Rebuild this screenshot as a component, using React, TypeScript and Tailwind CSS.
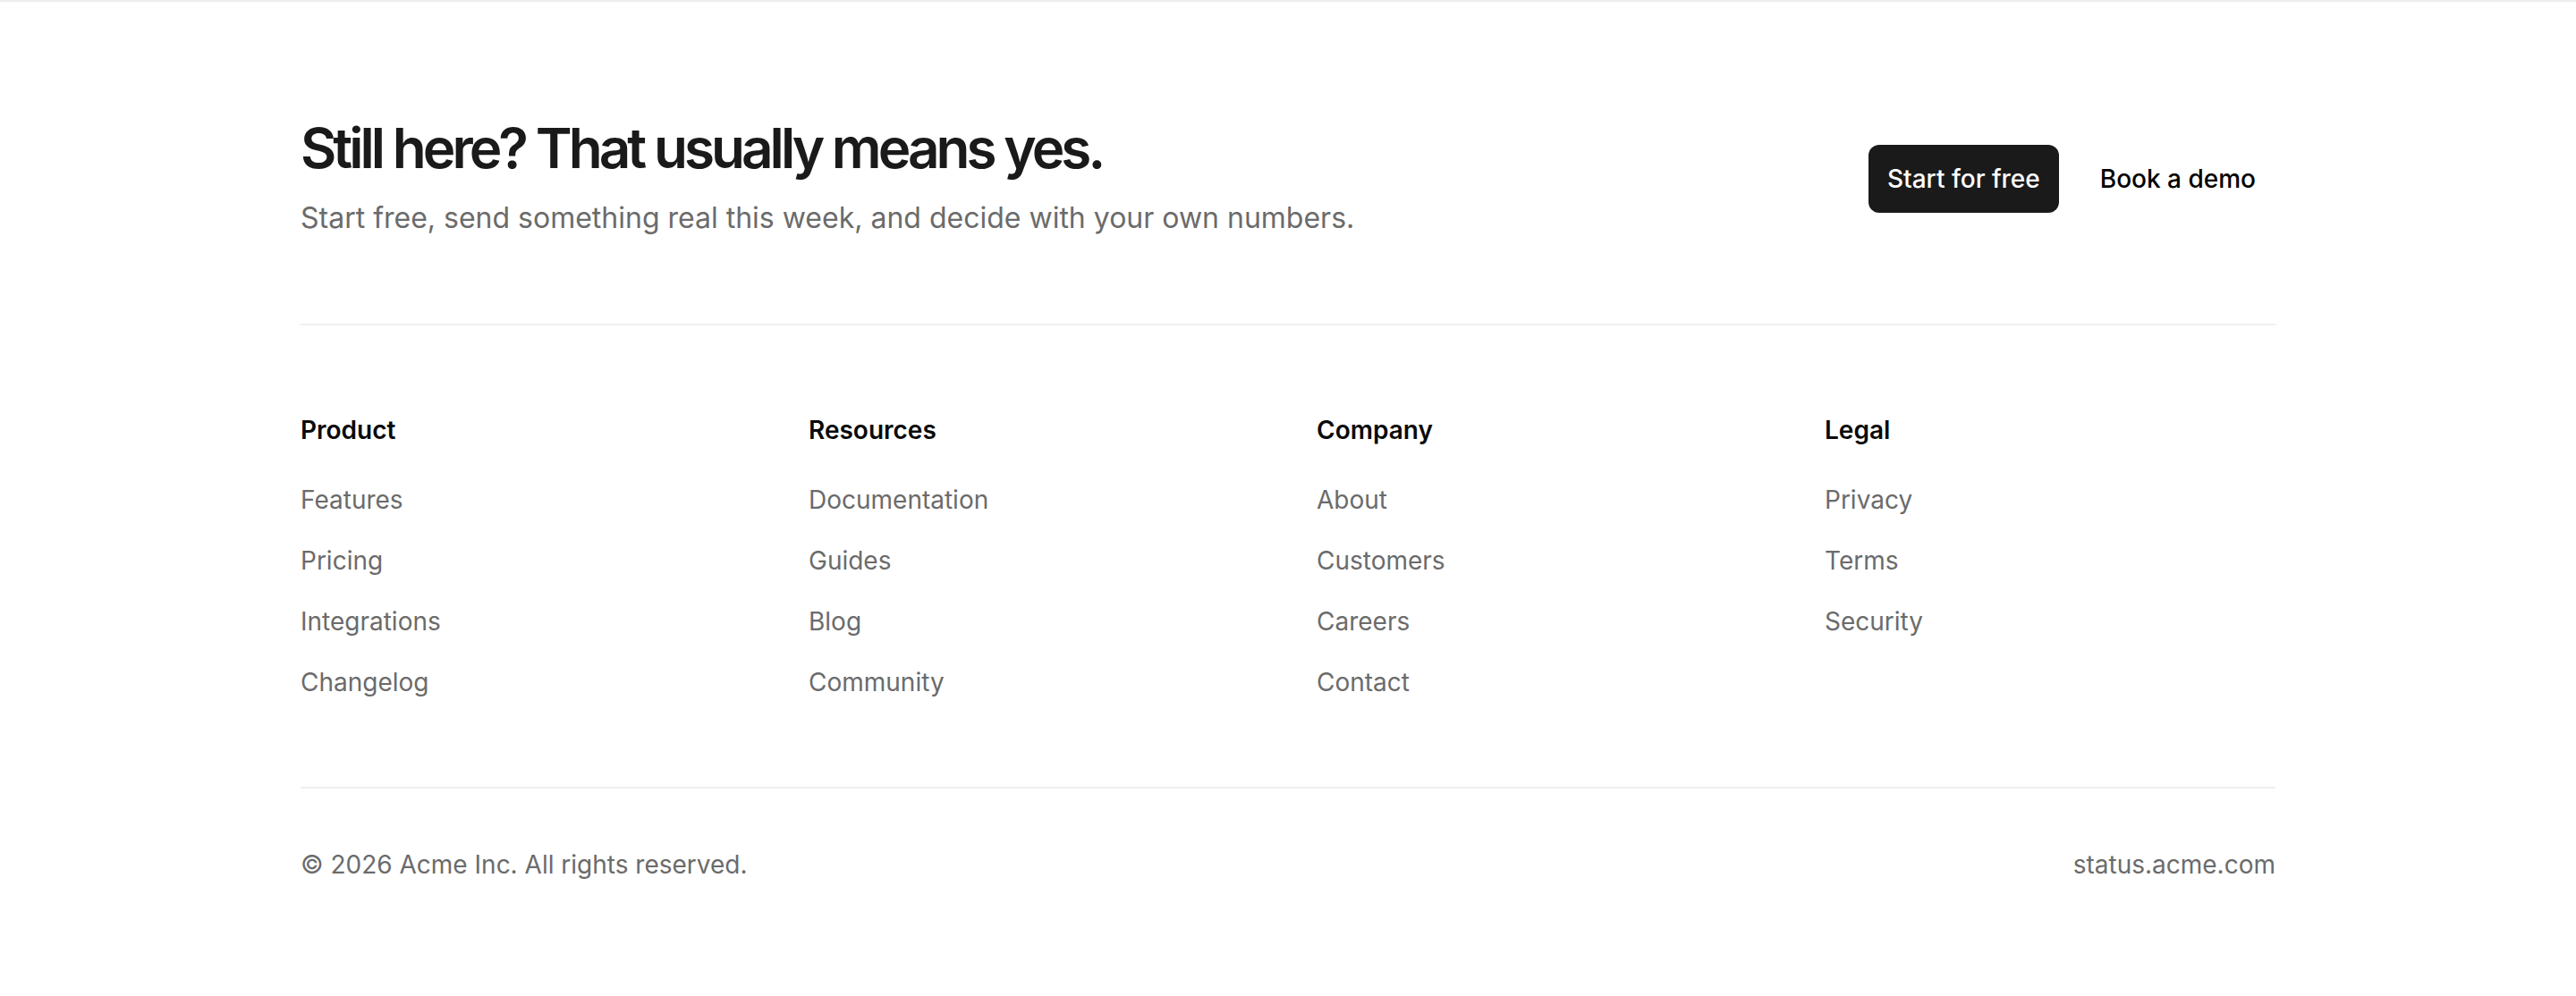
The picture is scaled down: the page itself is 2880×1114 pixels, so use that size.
import React from "react";

const columns = [
  { title: "Product", links: ["Features", "Pricing", "Integrations", "Changelog"] },
  { title: "Resources", links: ["Documentation", "Guides", "Blog", "Community"] },
  { title: "Company", links: ["About", "Customers", "Careers", "Contact"] },
  { title: "Legal", links: ["Privacy", "Terms", "Security"] },
];

export default function App() {
  return (
    <footer
      className="w-full bg-white border-t-2 border-[#ededed]"
      style={{ fontFamily: "Inter, 'Noto Sans', sans-serif" }}
    >
      <div className="mx-auto w-[2208px]">
        <div className="flex items-center justify-between pt-[130px] pb-[94px] border-b-2 border-[#f0f0f0]">
          <div>
            <h2 className="text-[62px] leading-[68px] font-semibold tracking-[-0.064em] text-[#1a1a1a]">
              Still here? That usually means yes.
            </h2>
            <p className="mt-[20px] text-[32px] leading-[48px] text-[#6b6b6b]">
              Start free, send something real this week, and decide with your own numbers.
            </p>
          </div>
          <div className="flex items-center gap-[24px]">
            <a className="flex items-center h-[76px] px-[21px] rounded-[12px] bg-[#1a1a1a] text-white text-[28px] font-medium">
              Start for free
            </a>
            <a className="flex items-center h-[76px] px-[22px] rounded-[12px] text-black text-[28px] font-medium">
              Book a demo
            </a>
          </div>
        </div>

        <div className="grid grid-cols-4 gap-16 pt-24 pb-24 border-b-2 border-[#f0f0f0]">
          {columns.map((col) => (
            <div key={col.title}>
              <h3 className="text-[28px] leading-[42px] font-semibold text-[#0a0a0a]">{col.title}</h3>
              <ul className="mt-9 flex flex-col gap-[26px]">
                {col.links.map((l) => (
                  <li key={l}>
                    <a className="text-[28px] leading-[42px] text-[#6b6b6b]">{l}</a>
                  </li>
                ))}
              </ul>
            </div>
          ))}
        </div>

        <div className="flex items-center justify-between pt-16 pb-32 text-[28px] leading-[42px] text-[#6b6b6b]">
          <span>© 2026 Acme Inc. All rights reserved.</span>
          <a>status.acme.com</a>
        </div>
      </div>
    </footer>
  );
}
